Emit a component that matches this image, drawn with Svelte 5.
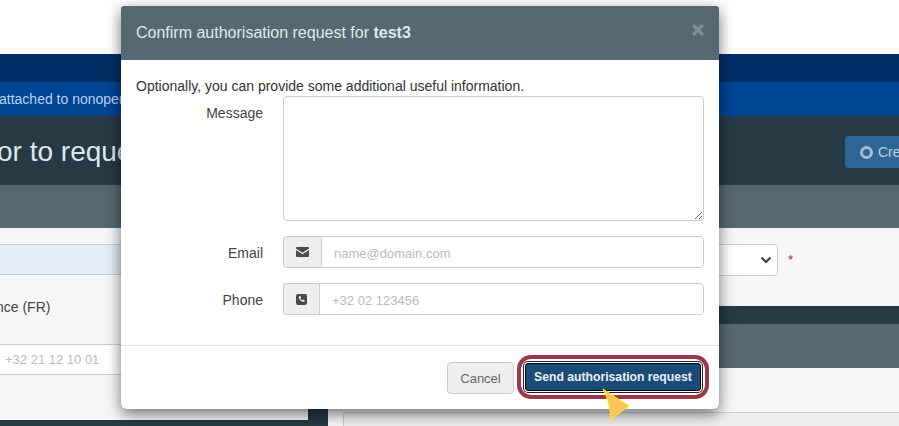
<script>
  // nothing dynamic here, just the request form state
  let message = $state('');
</script>

<div class="page">
  <div class="top-space"></div>
  <div class="nav"></div>
  <div class="notice">attached to nonoperational</div>
  <div class="title-bar">
    <h1>or to request</h1>
    <span class="create"><span class="ring"></span>Create</span>
  </div>
  <div class="sub-bar"></div>
  <div class="content">
    <div class="left">
      <div class="left-input"></div>
      <div class="left-text">nce (FR)</div>
      <div class="left-phone">+32 21 12 10 01</div>
      <div class="left-foot"></div>
    </div>
    <div class="gutter"></div>
    <div class="right">
      <div class="select-row">
        <div class="select">
          <svg width="12" height="8" viewBox="0 0 12 8"><path d="M1.500 1.500 6 6l4.500-4.500" fill="none" stroke="#444" stroke-width="2.200"/></svg>
        </div>
        <span class="req">*</span>
      </div>
      <div class="dark-strip"></div>
      <div class="slate-strip"></div>
      <div class="right-body"><div class="right-input"></div></div>
    </div>
  </div>
</div>

<div class="modal">
  <div class="modal-head">
    <span>Confirm authorisation request for <b>test3</b></span>
    <svg class="close" width="12" height="12" viewBox="0 0 12 12"><path d="M2 2l8 8M10 2l-8 8" stroke="#7d8e98" stroke-width="3.400" stroke-linecap="round"/></svg>
  </div>
  <div class="modal-body">
    <p>Optionally, you can provide some additional useful information.</p>
    <div class="row">
      <label for="msg">Message</label>
      <textarea id="msg" bind:value={message}></textarea>
    </div>
    <div class="row email">
      <label for="mail">Email</label>
      <div class="group">
        <span class="addon mail">
          <svg width="13" height="10" viewBox="0 0 13 10"><path d="M0 1a1 1 0 0 1 1-1h11a1 1 0 0 1 1 1v.500L6.500 5.800 0 1.500zM0 3l6.500 4.300L13 3v6a1 1 0 0 1-1 1H1a1 1 0 0 1-1-1z" fill="#4a4a4a"/></svg>
        </span>
        <input id="mail" placeholder="name@domain.com" />
      </div>
    </div>
    <div class="row phone">
      <label for="tel">Phone</label>
      <div class="group">
        <span class="addon tel">
          <svg width="11" height="11" viewBox="0 0 11 11"><rect width="11" height="11" rx="2" fill="#4a4a4a"/><path d="M3 2.300 4.300 2l.8 1.800-.8.700c.3.900 1 1.600 1.900 1.900l.7-.8 1.800.8-.3 1.300c-3 .6-5.900-2.300-5.400-5.400z" fill="#fff"/></svg>
        </span>
        <input id="tel" placeholder="+32 02 123456" />
      </div>
    </div>
  </div>
  <div class="modal-foot">
    <button class="cancel">Cancel</button>
    <div class="highlight"><button class="send">Send authorisation request</button></div>
  </div>
</div>

<svg class="pointer" width="28" height="34" viewBox="0 0 28 34"><path d="M1 1 27 18 9 31Q8 14 1 1z" fill="#fdc45c" stroke="#fff200" stroke-width="1"/></svg>

<style>
  :global(body) {
    margin: 0;
    background: #fff;
    overflow: hidden;
  }

  .page {
    width: 899px;
    height: 426px;
    font-family: "Liberation Sans", Arial, sans-serif;
    display: flex;
    flex-direction: column;
    overflow: hidden;
  }

  .top-space { height: 54px; flex: none; }
  .nav { height: 28px; flex: none; background: #002e66; }

  .notice {
    height: 34px;
    flex: none;
    background: #004494;
    color: #b9d2ef;
    font-size: 14px;
    line-height: 34px;
    white-space: nowrap;
    text-indent: -1px;
  }

  .title-bar {
    height: 69px;
    flex: none;
    background: #263a46;
    display: flex;
    align-items: center;
    justify-content: space-between;
    overflow: hidden;
  }

  h1 {
    margin: 3px 0 0 -3px;
    font-size: 28px;
    font-weight: 400;
    color: #dce8ee;
    white-space: nowrap;
  }

  .create {
    width: 54px;
    height: 32px;
    box-sizing: border-box;
    margin-top: 3px;
    padding-left: 15px;
    flex: none;
    display: flex;
    align-items: center;
    gap: 5px;
    background: #2e6594;
    border-radius: 3px 0 0 3px;
    color: #bcd2e4;
    font-size: 14px;
    overflow: hidden;
  }

  .ring {
    width: 7px;
    height: 7px;
    flex: none;
    border: 3px solid #a9bccb;
    border-radius: 50%;
  }

  .sub-bar { height: 43px; flex: none; background: #556873; }

  .content {
    flex: 1;
    display: flex;
    background: #f7f7f7;
  }

  .left {
    width: 308px;
    flex: none;
    display: flex;
    flex-direction: column;
  }

  .left-input {
    height: 29px;
    margin-top: 16px;
    background: #e4ecf9;
    border-top: 1px solid #ccc;
    border-bottom: 1px solid #ccc;
  }

  .left-text {
    margin-top: 22px;
    font-size: 14px;
    line-height: 20px;
    color: #444;
    text-indent: -4px;
  }

  .left-phone {
    height: 29px;
    margin-top: 27px;
    background: #fff;
    border-top: 1px solid #ccc;
    border-bottom: 1px solid #ccc;
    padding-left: 5px;
    font-size: 13px;
    line-height: 30px;
    color: #bbb;
  }

  .left-foot {
    margin-top: auto;
    height: 6px;
    background: #263a46;
  }

  .gutter {
    width: 20px;
    flex: none;
    background: #263a46;
  }

  .right {
    flex: 1;
    display: flex;
    flex-direction: column;
  }

  .select-row {
    height: 78px;
    flex: none;
    box-sizing: border-box;
    padding-top: 16px;
    display: flex;
    align-items: flex-start;
  }

  .select {
    width: 450px;
    height: 32px;
    box-sizing: border-box;
    background: #fff;
    border: 1px solid #ccc;
    border-radius: 0 4px 4px 0;
    display: flex;
    align-items: center;
    justify-content: flex-end;
    padding-right: 5px;
  }

  .req {
    margin-left: 10px;
    color: #9c3245;
    font-size: 13px;
    line-height: 31px;
  }

  .dark-strip { height: 18px; flex: none; background: #263a46; }
  .slate-strip { height: 44px; flex: none; background: #556873; }

  .right-body {
    flex: 1;
    padding-left: 15px;
    display: flex;
    flex-direction: column;
    justify-content: flex-end;
  }

  .right-input {
    height: 13px;
    background: #efefef;
    border-top: 1px solid #ccc;
    border-left: 1px solid #ccc;
    border-top-left-radius: 4px;
  }

  .modal {
    position: absolute;
    left: 121px;
    top: 6px;
    width: 598px;
    height: 403px;
    display: flex;
    flex-direction: column;
    background: #fff;
    border-radius: 3px 3px 6px 6px;
    box-shadow: 0 5px 15px rgba(0, 0, 0, 0.55);
    font-family: "Liberation Sans", Arial, sans-serif;
    font-size: 14px;
    color: #444;
    overflow: hidden;
  }

  .modal-head {
    height: 54px;
    flex: none;
    box-sizing: border-box;
    padding: 0 15px;
    background: #556873;
    color: #dfe8ec;
    font-size: 16px;
    display: flex;
    align-items: center;
    justify-content: space-between;
  }

  .close { margin-top: -7px; }

  .modal-body {
    flex: 1;
    padding: 18px 15px 0;
  }

  p {
    margin: 0;
    line-height: 16px;
    color: #333;
  }

  .row {
    display: flex;
    align-items: flex-start;
  }

  label {
    width: 127px;
    height: 32px;
    flex: none;
    text-align: right;
    margin-right: 20px;
    color: #444;
    line-height: 34px;
  }

  .row:nth-of-type(1) { margin-top: 2px; }

  textarea {
    width: 421px;
    height: 125px;
    box-sizing: border-box;
    border: 1px solid #ccc;
    border-radius: 4px;
    padding: 6px 12px;
    font: inherit;
    background: #fff;
    outline: none;
    display: block;
  }

  .email, .phone { margin-top: 15px; }

  .group {
    width: 421px;
    height: 32px;
    display: flex;
  }

  .addon {
    flex: none;
    box-sizing: border-box;
    background: #eee;
    border: 1px solid #ccc;
    border-right: 0;
    border-radius: 4px 0 0 4px;
    display: flex;
    align-items: center;
    justify-content: center;
  }

  .addon.mail { width: 38px; }
  .addon.tel { width: 36px; }

  input {
    flex: 1;
    min-width: 0;
    box-sizing: border-box;
    border: 1px solid #ccc;
    border-radius: 0 4px 4px 0;
    padding: 2px 12px 0;
    font: inherit;
    font-size: 13px;
    outline: none;
    background: #fff;
  }

  input::placeholder {
    color: #bbb;
    opacity: 1;
  }

  .modal-foot {
    height: 64px;
    flex: none;
    box-sizing: border-box;
    border-top: 1px solid #e5e5e5;
    padding: 9px 10px 0 0;
    display: flex;
    justify-content: flex-end;
    align-items: flex-start;
    gap: 3px;
  }

  button {
    font-family: inherit;
    cursor: pointer;
  }

  .cancel {
    width: 67px;
    height: 32px;
    margin-top: 7px;
    padding: 0;
    background: #eee;
    border: 1px solid #ccc;
    border-radius: 4px;
    color: #666;
    font-size: 13px;
  }

  .highlight {
    border: 4px solid #9c3648;
    border-radius: 14px;
    padding: 4px;
    background: #fff;
  }

  .send {
    display: block;
    width: 176px;
    height: 28px;
    padding: 0;
    box-sizing: border-box;
    background: #1b4c78;
    border: 1.500px solid #000;
    box-shadow: 0 0 0 1px #fff, 0 0 0 2px #222;
    border-radius: 3px;
    color: #e8f0f6;
    font-size: 12.200px;
    font-weight: 700;
  }

  .pointer {
    position: absolute;
    left: 602px;
    top: 388px;
  }
</style>
